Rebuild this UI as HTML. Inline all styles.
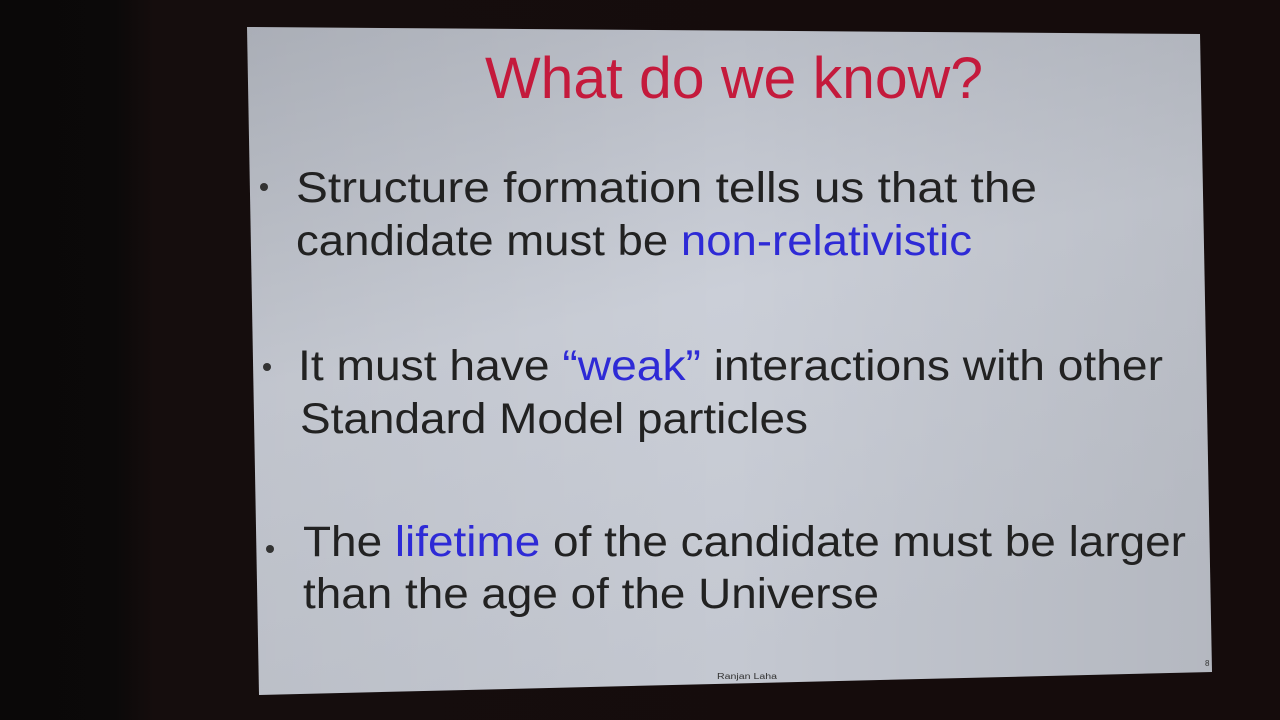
<!DOCTYPE html>
<html><head><meta charset="utf-8"><style>
html,body{margin:0;padding:0;width:1280px;height:720px;overflow:hidden;background:#130b0b;}
</style></head><body>
<svg width="1280" height="720" viewBox="0 0 1280 720" xmlns="http://www.w3.org/2000/svg">
<defs>
<linearGradient id="bg" x1="0" y1="0" x2="1" y2="0">
<stop offset="0" stop-color="#0a0808"/><stop offset="0.09" stop-color="#0b0909"/><stop offset="0.12" stop-color="#150d0d"/><stop offset="1" stop-color="#150c0c"/>
</linearGradient>
<linearGradient id="sl" x1="0" y1="0" x2="0.3" y2="1">
<stop offset="0" stop-color="#b3b7c0"/><stop offset="0.5" stop-color="#cbcfd8"/><stop offset="1" stop-color="#c4c8d1"/>
</linearGradient>
<linearGradient id="sh" x1="0" y1="0" x2="1" y2="0">
<stop offset="0" stop-color="#000" stop-opacity="0.05"/><stop offset="0.5" stop-color="#000" stop-opacity="0"/><stop offset="1" stop-color="#000" stop-opacity="0.08"/>
</linearGradient>
</defs>
<rect width="1280" height="720" fill="url(#bg)"/>
<polygon points="247,27 1200,34 1212,672 259,695" fill="url(#sl)"/>
<polygon points="247,27 1200,34 1212,672 259,695" fill="url(#sh)"/>
<g font-family="Liberation Sans, sans-serif">
<text x="485" y="98" font-size="58" fill="#c41a3c" textLength="498" lengthAdjust="spacingAndGlyphs">What do we know?</text>
<g fill="#222" font-size="43">
<circle cx="264" cy="187" r="4" fill="#333"/>
<circle cx="267" cy="367" r="4" fill="#333"/>
<circle cx="270" cy="549" r="4" fill="#333"/>
<text x="296" y="202" textLength="741" lengthAdjust="spacingAndGlyphs">Structure formation tells us that the</text>
<text x="296" y="255" textLength="676" lengthAdjust="spacingAndGlyphs">candidate must be <tspan fill="#2e2ad6">non-relativistic</tspan></text>
<text x="298" y="380" textLength="865" lengthAdjust="spacingAndGlyphs">It must have <tspan fill="#2e2ad6">“weak”</tspan> interactions with other</text>
<text x="300" y="433" textLength="508" lengthAdjust="spacingAndGlyphs">Standard Model particles</text>
<text x="303" y="556" textLength="883" lengthAdjust="spacingAndGlyphs">The <tspan fill="#2e2ad6">lifetime</tspan> of the candidate must be larger</text>
<text x="303" y="608" textLength="576" lengthAdjust="spacingAndGlyphs">than the age of the Universe</text>
</g>
<text x="717" y="679" font-size="8" fill="#333" textLength="60" lengthAdjust="spacingAndGlyphs">Ranjan Laha</text>
<text x="1205" y="666" font-size="8" fill="#333">8</text>
</g>
</svg>
</body></html>
